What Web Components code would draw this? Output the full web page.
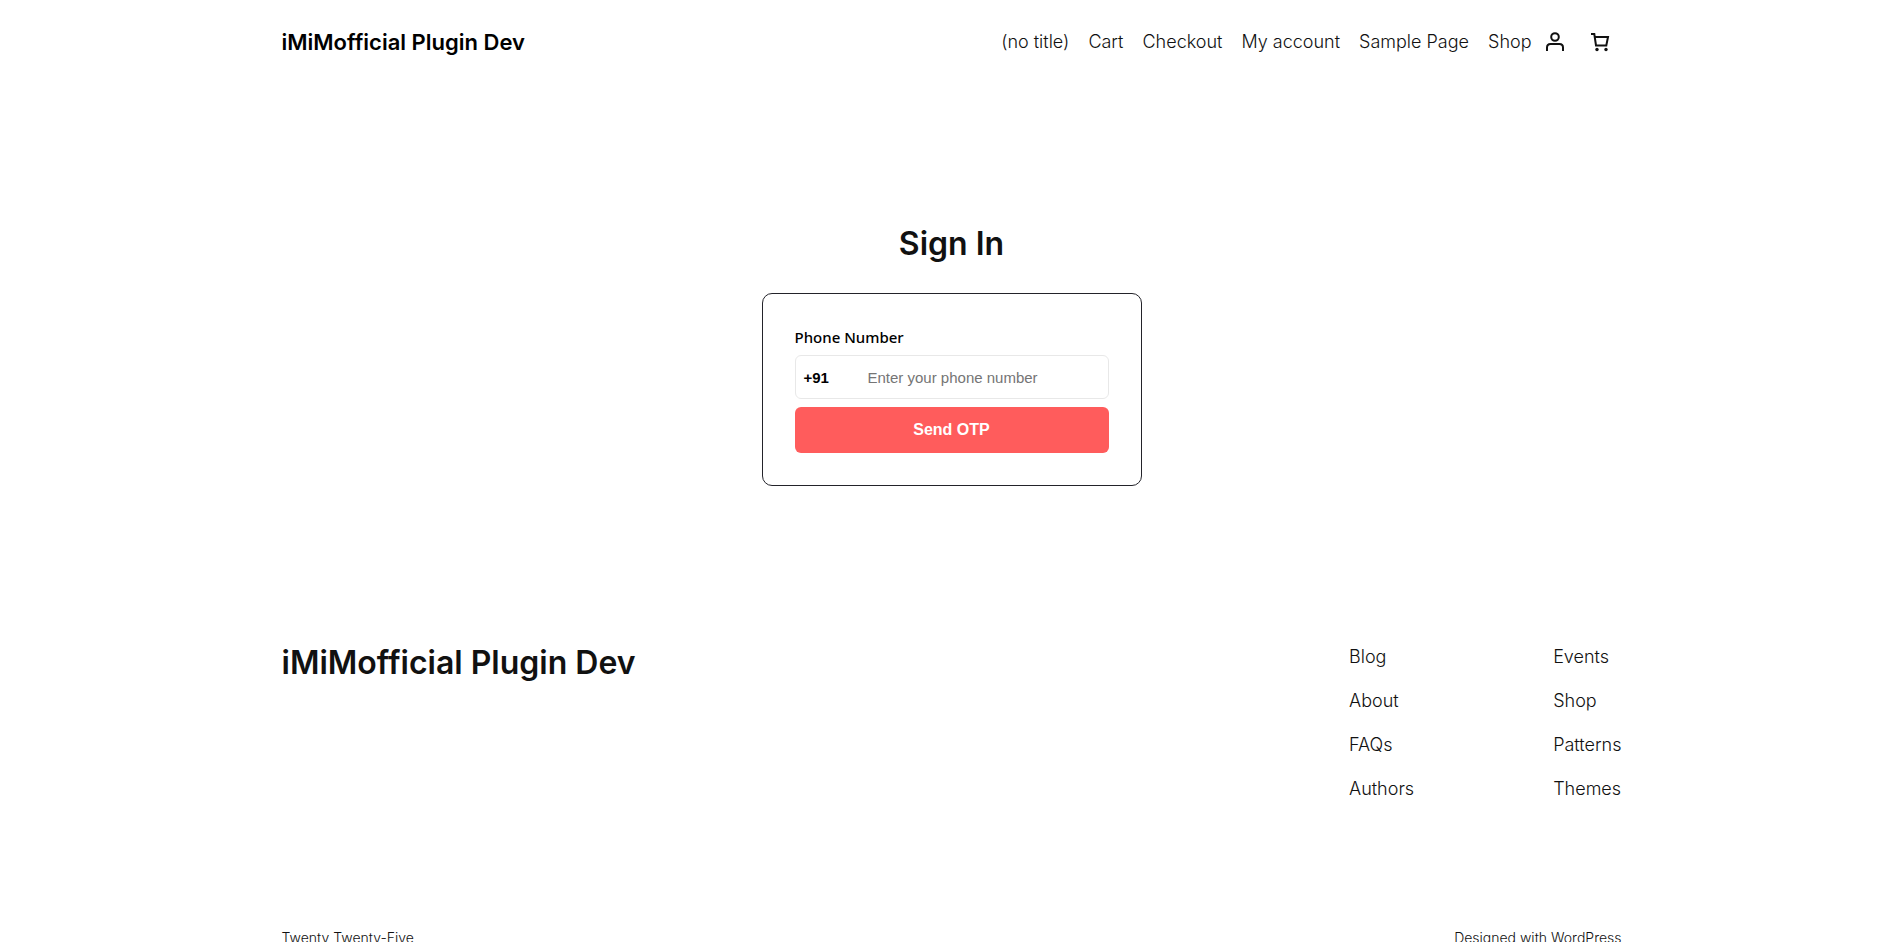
<!DOCTYPE html>
<html lang="en">
<head>
<meta charset="utf-8">
<meta name="viewport" content="width=device-width, initial-scale=1">
<title>Sign In – iMiMofficial Plugin Dev</title>
<style>
  body { margin: 0; background: #fff; color: #111; font: 300 18px/26px Inter, "Open Sans", sans-serif; }
</style>
</head>
<body>
<site-page>
  <site-header slot="header">
    <nav-link href="#home">(no title)</nav-link>
    <nav-link href="#cart">Cart</nav-link>
    <nav-link href="#checkout">Checkout</nav-link>
    <nav-link href="#account">My account</nav-link>
    <nav-link href="#sample">Sample Page</nav-link>
    <nav-link href="#shop">Shop</nav-link>
  </site-header>
  <sign-in-form></sign-in-form>
  <site-footer slot="footer">
    <nav-link slot="first" href="#blog">Blog</nav-link>
    <nav-link slot="first" href="#about">About</nav-link>
    <nav-link slot="first" href="#faqs">FAQs</nav-link>
    <nav-link slot="first" href="#authors">Authors</nav-link>
    <nav-link slot="second" href="#events">Events</nav-link>
    <nav-link slot="second" href="#store">Shop</nav-link>
    <nav-link slot="second" href="#patterns">Patterns</nav-link>
    <nav-link slot="second" href="#themes">Themes</nav-link>
  </site-footer>
</site-page>
<script>
  class ShadowElement extends HTMLElement {
    constructor() {
      super();
      this.attachShadow({ mode: 'open' }).innerHTML = this.constructor.markup;
    }
  }

  customElements.define('site-page', class extends ShadowElement {
    static markup = `
      <style>
        :host { display: block; padding: 0 48px; }
        .wrap { max-width: 1340px; margin: 0 auto; }
        main { padding: 136px 0 152px; }
      </style>
      <div class="wrap">
        <slot name="header"></slot>
        <main><slot></slot></main>
        <slot name="footer"></slot>
      </div>`;
  });

  customElements.define('nav-link', class extends ShadowElement {
    static markup = `
      <style>
        :host { display: block; }
        a { color: inherit; text-decoration: none; }
        a:hover { text-decoration: underline; }
      </style>
      <a><slot></slot></a>`;
    connectedCallback() {
      this.shadowRoot.querySelector('a').href = this.getAttribute('href');
    }
  });

  customElements.define('site-header', class extends ShadowElement {
    static markup = `
      <style>
        :host { display: block; }
        header { display: flex; align-items: center; justify-content: space-between; gap: 24px; min-height: 84px; }
        .brand { color: #000; font-size: 22px; font-weight: 600; text-decoration: none; }
        .right { display: flex; align-items: center; gap: 12px; }
        nav { display: flex; flex-wrap: wrap; gap: 4px 19px; }
        .icons { display: flex; gap: 20px; padding-right: 8px; }
        .icons a, .icons button { display: flex; padding: 0; border: 0; background: none; color: #111; cursor: pointer; }
        .icons button { padding: 0 4px; }
        svg { display: block; fill: none; stroke: currentColor; stroke-width: 2; }
      </style>
      <header>
        <a class="brand" href="#home">iMiMofficial Plugin Dev</a>
        <div class="right">
          <nav aria-label="Main"><slot></slot></nav>
          <div class="icons">
            <a href="#account" aria-label="My account">
              <svg width="22" height="20" viewBox="0 0 22 20"><circle cx="11" cy="5" r="3.8"/><path d="M3 19v-3.500q0-3.500 3.500-3.500h9q3.500 0 3.500 3.500V19"/></svg>
            </a>
            <button type="button" aria-label="Cart">
              <svg width="20" height="20" viewBox="0 0 20 20"><path d="M1 2h3.300L6 13.500h10.300L18 5H5"/><circle cx="7" cy="17.500" r="1.700" fill="currentColor" stroke="none"/><circle cx="16" cy="17.500" r="1.700" fill="currentColor" stroke="none"/></svg>
            </button>
          </div>
        </div>
      </header>`;
  });

  customElements.define('sign-in-form', class extends ShadowElement {
    static markup = `
      <style>
        :host { display: block; }
        *, ::placeholder { box-sizing: border-box; }
        h1 { margin: 0 0 26px; text-align: center; font-size: 32px; line-height: 47px; font-weight: 600; }
        form { display: flex; flex-direction: column; max-width: 380px; margin: 0 auto; padding: 32px; border: 1px solid #23232a; border-radius: 10px; }
        label { color: #000; font: 500 15px/23px "Noto Sans", "Open Sans", sans-serif; margin-bottom: 6px; }
        .field { display: flex; align-items: center; height: 44px; margin-bottom: 8px; border: 1px solid #e8e8e8; border-radius: 6px; padding: 0 8px; font: 15px "Liberation Sans", Arial, sans-serif; }
        .code { width: 64px; color: #000; font-weight: 700; }
        input { flex: 1; min-width: 0; height: 100%; padding: 0; border: 0; outline: 0; background: none; color: #000; font: inherit; }
        ::placeholder { color: #757575; }
        button { height: 46px; border: 0; border-radius: 6px; background: #ff5c5c; color: #fff; font: 700 16px "Liberation Sans", Arial, sans-serif; cursor: pointer; }
      </style>
      <h1>Sign In</h1>
      <form>
        <label for="phone">Phone Number</label>
        <div class="field">
          <span class="code">+91</span>
          <input id="phone" type="tel" placeholder="Enter your phone number">
        </div>
        <button type="submit">Send OTP</button>
      </form>`;
  });

  customElements.define('site-footer', class extends ShadowElement {
    static markup = `
      <style>
        :host { display: block; }
        .top { display: flex; justify-content: space-between; gap: 48px; padding-bottom: 124px; }
        h2 { margin: 0; font-size: 32px; line-height: 50px; font-weight: 600; }
        h2 a, .bottom a { color: inherit; text-decoration: none; }
        .links { display: flex; gap: 139px; padding-top: 6px; }
        nav { display: flex; flex-direction: column; gap: 18px; }
        nav:first-child { min-width: 64px; }
        .bottom { display: flex; justify-content: space-between; gap: 24px; padding-bottom: 80px; font-size: 14px; line-height: 24px; }
      </style>
      <footer>
        <div class="top">
          <h2><a href="#home">iMiMofficial Plugin Dev</a></h2>
          <div class="links">
            <nav aria-label="About"><slot name="first"></slot></nav>
            <nav aria-label="More"><slot name="second"></slot></nav>
          </div>
        </div>
        <div class="bottom">
          <span>Twenty Twenty-Five</span>
          <span>Designed with <a href="#wordpress">WordPress</a></span>
        </div>
      </footer>`;
  });
</script>
</body>
</html>
